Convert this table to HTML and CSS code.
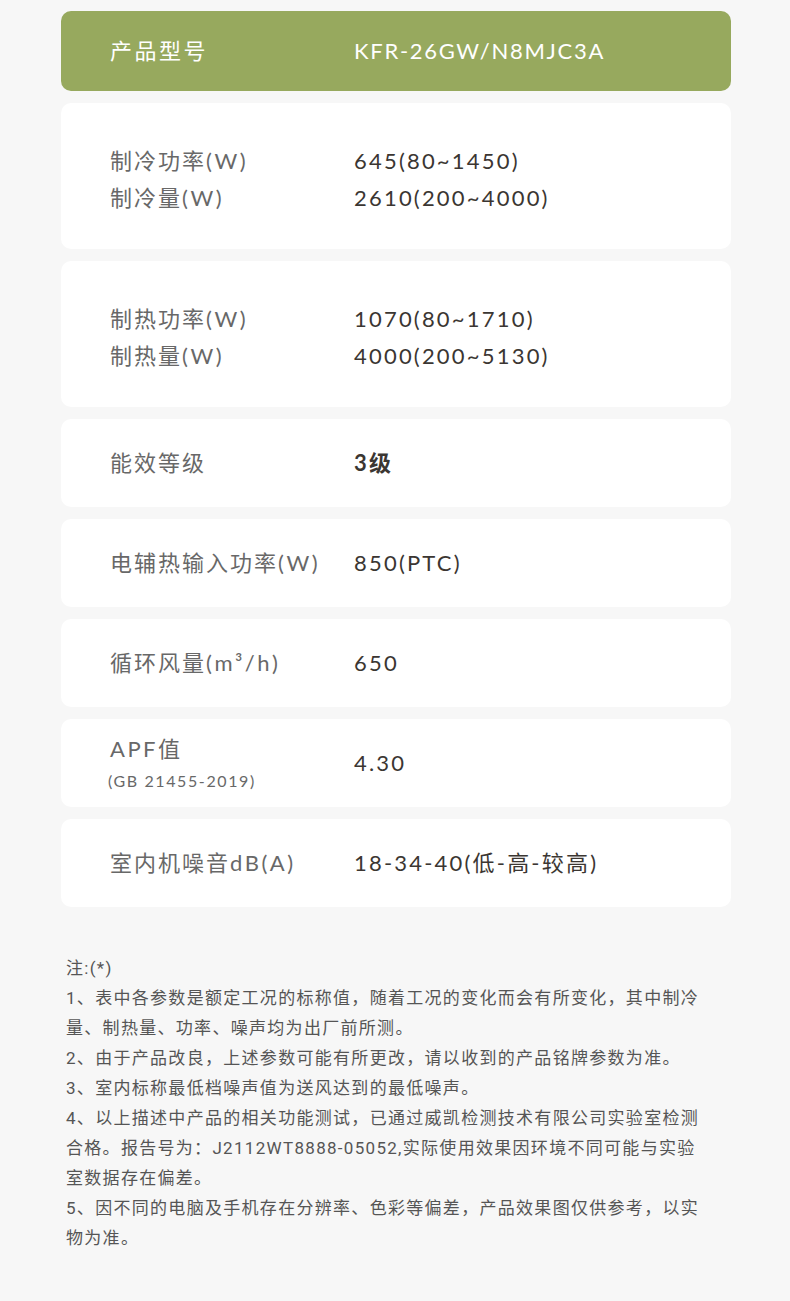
FILE: index.html
```html
<!DOCTYPE html>
<html lang="zh">
<head>
<meta charset="utf-8">
<title>产品参数</title>
<link rel="stylesheet" href="styles.css">
</head>
<body>
<div class="page">
  <div class="card head">
    <div class="label">产品型号</div>
    <div class="value">KFR-26GW/N8MJC3A</div>
  </div>
  <div class="card double">
    <div class="label">制冷功率<span class="en">(W)</span></div>
    <div class="value">645(80~1450)</div>
    <div class="label">制冷量<span class="en">(W)</span></div>
    <div class="value">2610(200~4000)</div>
  </div>
  <div class="card double">
    <div class="label">制热功率<span class="en">(W)</span></div>
    <div class="value">1070(80~1710)</div>
    <div class="label">制热量<span class="en">(W)</span></div>
    <div class="value">4000(200~5130)</div>
  </div>
  <div class="card">
    <div class="label">能效等级</div>
    <div class="value bold">3级</div>
  </div>
  <div class="card">
    <div class="label">电辅热输入功率<span class="en">(W)</span></div>
    <div class="value">850(PTC)</div>
  </div>
  <div class="card">
    <div class="label">循环风量<span class="en">(m³/h)</span></div>
    <div class="value">650</div>
  </div>
  <div class="card">
    <div class="label stack"><span><span class="en">APF</span>值</span><span class="sub">(GB 21455-2019)</span></div>
    <div class="value">4.30</div>
  </div>
  <div class="card">
    <div class="label">室内机噪音<span class="en">dB(A)</span></div>
    <div class="value">18-34-40(低-高-较高)</div>
  </div>
  <div class="notes">
    <p>注:(*)</p>
    <p>1、表中各参数是额定工况的标称值，随着工况的变化而会有所变化，其中制冷<br>量、制热量、功率、噪声均为出厂前所测。</p>
    <p>2、由于产品改良，上述参数可能有所更改，请以收到的产品铭牌参数为准。</p>
    <p>3、室内标称最低档噪声值为送风达到的最低噪声。</p>
    <p>4、以上描述中产品的相关功能测试，已通过威凯检测技术有限公司实验室检测<br>合格。报告号为：J2112WT8888-05052,实际使用效果因环境不同可能与实验<br>室数据存在偏差。</p>
    <p>5、因不同的电脑及手机存在分辨率、色彩等偏差，产品效果图仅供参考，以实<br>物为准。</p>
  </div>
</div>
</body>
</html>
```

FILE: styles.css
```css
html, body {
  margin: 0;
  padding: 0;
  background: #f7f7f7;
}
body {
  font-family: Lato, "Noto Sans CJK SC", sans-serif;
}
.page {
  width: 670px;
  margin-left: 61px;
  padding-top: 11px;
  display: flex;
  flex-direction: column;
  gap: 12px;
}
.card {
  background: #ffffff;
  border-radius: 10px;
  height: 88px;
  box-sizing: border-box;
  padding-left: 49px;
  display: grid;
  grid-template-columns: 244px 1fr;
  align-items: center;
  align-content: center;
}
.card.head {
  background: #97a95e;
  height: 80px;
}
.card.double {
  height: 146px;
  padding-top: 7px;
  grid-auto-rows: 37px;
}
.label {
  font-size: 22px;
  letter-spacing: 2px;
  color: #686868;
  line-height: 30px;
}
.label .en {
  letter-spacing: 2.5px;
}
.value {
  font-size: 22px;
  letter-spacing: 2.2px;
  color: #3b3632;
  line-height: 30px;
}
.value.bold {
  font-weight: 700;
}
.head .label {
  color: #ffffff;
  letter-spacing: 2.5px;
}
.head .value {
  color: #ffffff;
  letter-spacing: 1.7px;
}
.label.stack {
  display: flex;
  flex-direction: column;
  line-height: 30px;
  padding-top: 2px;
}
.label .sub {
  font-size: 16px;
  letter-spacing: 1.6px;
  line-height: 26px;
  margin-top: 4px;
  margin-left: -2px;
}
.notes {
  margin-top: 34px;
  padding-left: 5px;
  font-family: Roboto, "Noto Sans CJK SC", sans-serif;
  font-size: 17px;
  letter-spacing: 1.3px;
  line-height: 30px;
  color: #555555;
  padding-bottom: 40px;
}
.notes p {
  margin: 0;
  white-space: nowrap;
}
```
